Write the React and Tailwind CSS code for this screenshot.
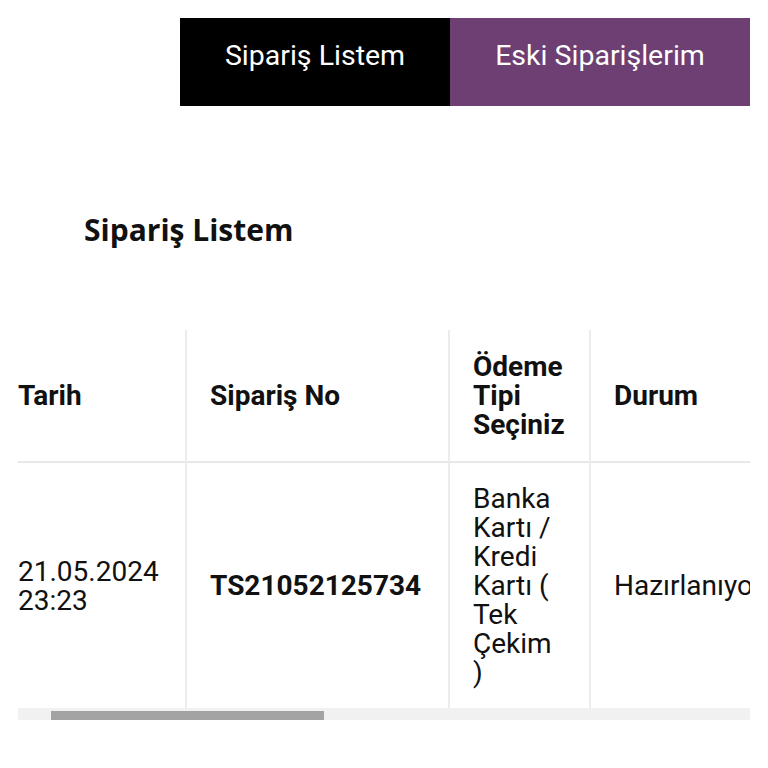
export default function App() {
  const roboto = { fontFamily: "Roboto, 'Liberation Sans', sans-serif" };
  return (
    <main className="h-[768px] w-[768px] overflow-hidden bg-white">
      {/* tabs */}
      <div className="flex justify-end pr-[18px] pt-[18px]" style={roboto}>
        <button
          type="button"
          className="flex h-[88px] w-[270px] items-center justify-center bg-black pb-[12px] text-[28.5px] text-white"
        >
          Sipariş Listem
        </button>
        <button
          type="button"
          className="flex h-[88px] w-[300px] items-center justify-center bg-[#6d3f73] pb-[12px] text-[28.5px] text-white"
        >
          Eski Siparişlerim
        </button>
      </div>

      <h1
        className="ml-[84px] mt-[104px] text-[30px] font-bold leading-[40px] text-[#111]"
        style={{ fontFamily: "'Open Sans', 'Liberation Sans', sans-serif" }}
      >
        Sipariş Listem
      </h1>

      {/* table */}
      <div className="ml-[18px] mt-[80px] w-[732px]" style={roboto}>
        <div className="overflow-hidden">
          <table className="w-[900px] table-fixed border-collapse text-left text-[28px] leading-[29px] text-[#111]">
            <colgroup>
              <col className="w-[168px]" />
              <col className="w-[263px]" />
              <col className="w-[141px]" />
              <col className="w-[328px]" />
            </colgroup>
            <thead>
              <tr className="h-[132px] border-b-2 border-[#e8e8e8]">
                <th className="border-r-2 border-[#ececec] align-middle font-bold">Tarih</th>
                <th className="border-r-2 border-[#ececec] pl-[23px] align-middle font-bold">Sipariş No</th>
                <th className="border-r-2 border-[#ececec] pl-[23px] align-middle font-bold">
                  Ödeme
                  <br />
                  Tipi
                  <br />
                  Seçiniz
                </th>
                <th className="pl-[23px] align-middle font-bold">Durum</th>
              </tr>
            </thead>
            <tbody>
              <tr className="h-[246px]">
                <td className="border-r-2 border-[#ececec] align-middle">
                  21.05.2024
                  <br />
                  23:23
                </td>
                <td className="border-r-2 border-[#ececec] pl-[23px] align-middle font-bold">TS21052125734</td>
                <td className="border-r-2 border-[#ececec] pl-[23px] align-middle">
                  Banka
                  <br />
                  Kartı /
                  <br />
                  Kredi
                  <br />
                  Kartı (
                  <br />
                  Tek
                  <br />
                  Çekim
                  <br />)
                </td>
                <td className="whitespace-nowrap pl-[23px] align-middle">Hazırlanıyor</td>
              </tr>
            </tbody>
          </table>
        </div>
        {/* scrollbar */}
        <div className="flex h-[12px] items-end bg-[#f1f1f1]">
          <div className="ml-[33px] h-[9px] w-[273px] bg-[#a3a3a3]" />
        </div>
      </div>
    </main>
  );
}
